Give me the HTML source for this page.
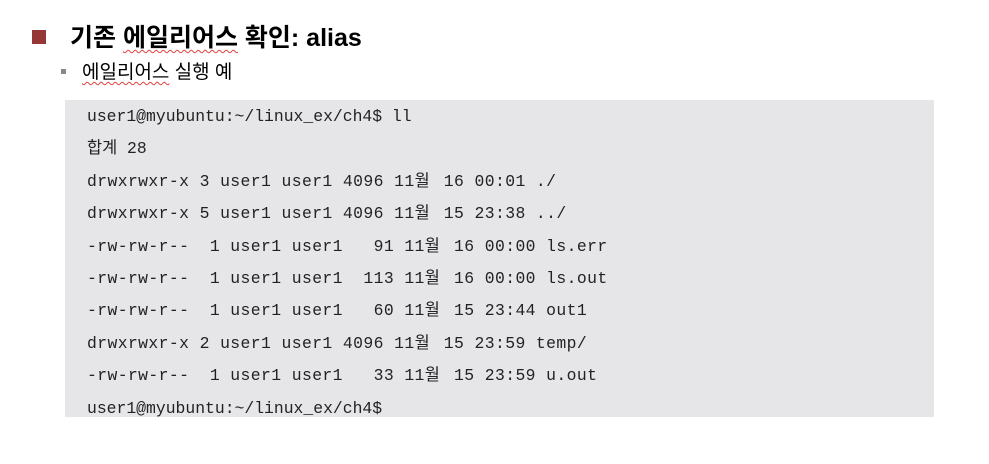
<!DOCTYPE html>
<html><head><meta charset="utf-8"><style>
body{margin:0;width:989px;height:464px;background:#fff;position:relative;overflow:hidden;font-family:"Liberation Sans","Noto Sans CJK KR",sans-serif}
.sq{position:absolute;left:32px;top:30px;width:14px;height:14px;background:#953735}
.t{position:absolute;left:70px;top:23px;font-size:25px;font-weight:bold;color:#000;white-space:nowrap;line-height:30px}
.sq2{position:absolute;left:61px;top:69px;width:5px;height:5px;background:#888}
.s{position:absolute;left:82px;top:61px;font-size:19px;color:#000;white-space:nowrap;line-height:24px}
.u{text-decoration:underline wavy #e04040;text-decoration-thickness:1px;text-underline-offset:3px}
.box{position:absolute;left:65px;top:100px;width:869px;height:317px;background:#e6e6e8}
pre{margin:0;position:absolute;left:87px;top:101px;font-family:"Liberation Mono","Noto Sans CJK KR",monospace;font-size:16.4px;line-height:32.4px;color:#222}
.w{letter-spacing:0.4px}
.k{display:inline-block;width:19px;letter-spacing:0}
</style></head><body>
<div class="sq"></div>
<div class="t">기존 <span class="u">에일리어스</span> 확인: alias</div>
<div class="sq2"></div>
<div class="s"><span class="u">에일리어스</span> 실행 예</div>
<div class="box"></div>
<pre>user1@myubuntu:~/linux_ex/ch4$ ll
합계 28
<span class="w">drwxrwxr-x 3 user1 user1 4096 11<span class="k">월</span> 16 00:01 ./</span>
<span class="w">drwxrwxr-x 5 user1 user1 4096 11<span class="k">월</span> 15 23:38 ../</span>
<span class="w">-rw-rw-r--  1 user1 user1   91 11<span class="k">월</span> 16 00:00 ls.err</span>
<span class="w">-rw-rw-r--  1 user1 user1  113 11<span class="k">월</span> 16 00:00 ls.out</span>
<span class="w">-rw-rw-r--  1 user1 user1   60 11<span class="k">월</span> 15 23:44 out1</span>
<span class="w">drwxrwxr-x 2 user1 user1 4096 11<span class="k">월</span> 15 23:59 temp/</span>
<span class="w">-rw-rw-r--  1 user1 user1   33 11<span class="k">월</span> 15 23:59 u.out</span>
user1@myubuntu:~/linux_ex/ch4$</pre>
</body></html>
